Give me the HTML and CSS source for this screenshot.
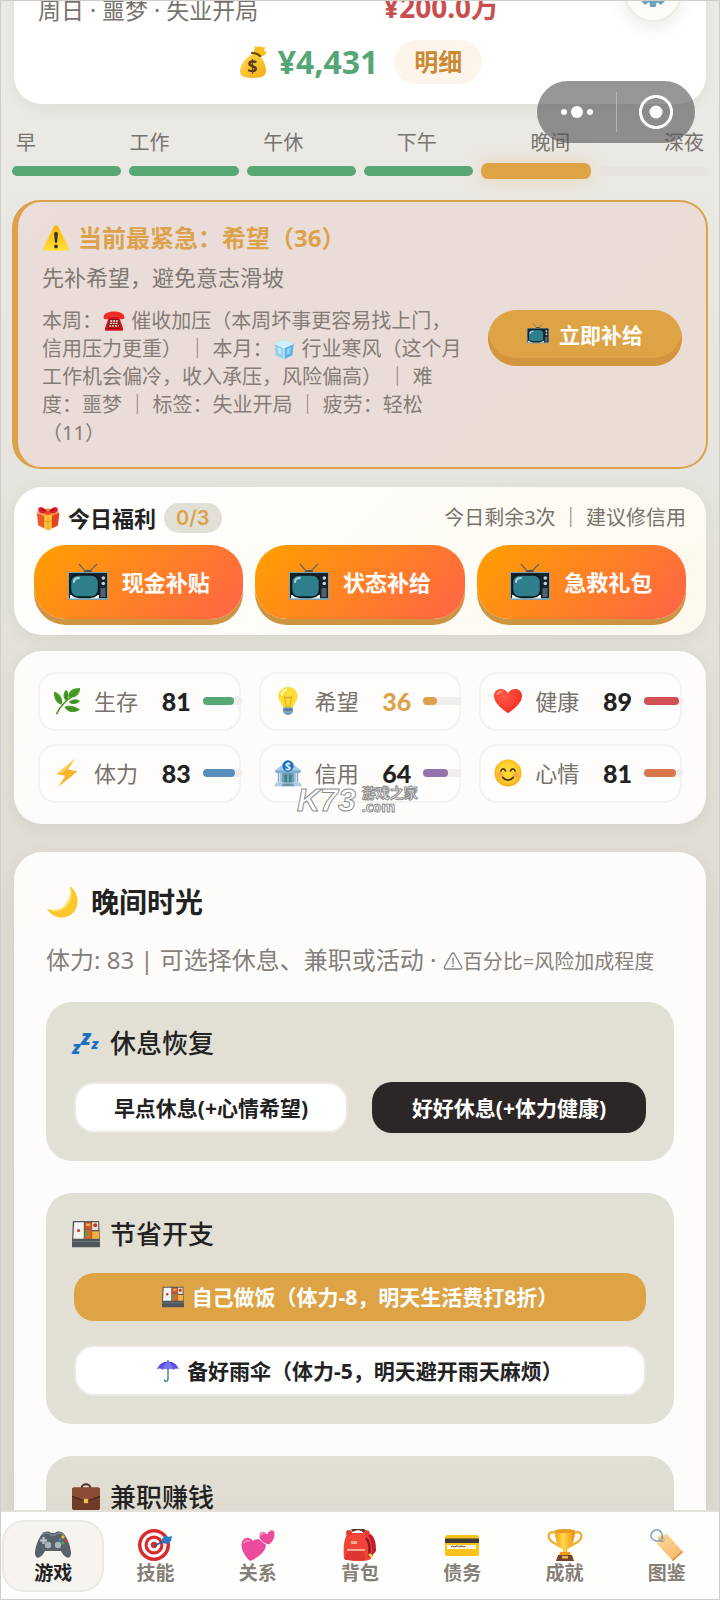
FILE: index.html
```html
<!DOCTYPE html>
<html lang="zh-CN">
<head>
<meta charset="utf-8">
<meta name="viewport" content="width=device-width, initial-scale=1">
<title>晚间时光</title>
<link rel="stylesheet" href="styles.css">
</head>
<body>
<svg class="sprite" aria-hidden="true">
  <defs>
    <linearGradient id="g-bag" x1="0" y1="0" x2="1" y2="1"><stop offset="0" stop-color="#ffd94a"/><stop offset="1" stop-color="#f5ae18"/></linearGradient>
    <linearGradient id="g-warn" x1="0" y1="0" x2="0" y2="1"><stop offset="0" stop-color="#ffb300"/><stop offset="1" stop-color="#ffe23e"/></linearGradient>
    <radialGradient id="g-heart" cx=".35" cy=".3" r=".8"><stop offset="0" stop-color="#ff5a4a"/><stop offset="1" stop-color="#f0281e"/></radialGradient>
    <radialGradient id="g-face" cx=".5" cy=".45" r=".55"><stop offset=".5" stop-color="#ffd733"/><stop offset="1" stop-color="#f7ae1c"/></radialGradient>
    <linearGradient id="g-cup" x1="0" y1="0" x2="1" y2="0"><stop offset="0" stop-color="#f49a16"/><stop offset=".4" stop-color="#ffd94d"/><stop offset="1" stop-color="#f08f10"/></linearGradient>
    <linearGradient id="g-tag" x1="0" y1="0" x2="1" y2="1"><stop offset="0" stop-color="#ffd9a0"/><stop offset="1" stop-color="#f5b562"/></linearGradient>
  </defs>
  <symbol id="gear" viewBox="0 0 32 32">
    <g fill="#6fa3bd"><circle cx="16" cy="16" r="11"/><path d="M13 1h6l1 6h-8zM13 31h6l1-6h-8z"/><path d="M1 13v6l6 1v-8zM31 13v6l-6 1v-8z"/><path transform="rotate(45 16 16)" d="M13 1h6l1 6h-8zM13 31h6l1-6h-8zM1 13v6l6 1v-8zM31 13v6l-6 1v-8z"/></g>
    <circle cx="16" cy="16" r="5" fill="#fdfcf9"/>
  </symbol>
  <symbol id="warn" viewBox="0 0 32 32">
    <path d="M16 1.500c1 0 1.700.5 2.200 1.400l12.400 24c.9 1.800-.1 3.600-2 3.600H3.400c-1.900 0-2.900-1.800-2-3.600l12.400-24c.5-.9 1.200-1.400 2.200-1.400z" fill="url(#g-warn)"/>
    <path d="M13.900 11.500c0-3 4.200-3 4.200 0l-.8 9c-.2 1.700-2.400 1.700-2.600 0z" fill="#333"/><circle cx="16" cy="25.600" r="2.100" fill="#333"/>
  </symbol>
  <symbol id="phone" viewBox="0 0 32 32">
    <path d="M9 9h14l6 17v4H3v-4z" fill="#d7141a"/>
    <path d="M1 12c-1-7 6-10 15-10s16 3 15 10c0 2-8 2-8 0 0-3-1-3-7-3s-7 0-7 3c0 2-8 2-8 0z" fill="#ef2b27"/>
    <path d="M9 13h14l2 12H7z" fill="#8d1013"/>
    <path d="M10.500 16h11M9.800 19.500h12.400M9 23h14" stroke="#fff" stroke-width="2" stroke-dasharray="3 1.200"/>
    <path d="M4 27h24" stroke="#9f0d12" stroke-width="1.500"/>
  </symbol>
  <symbol id="ice" viewBox="0 0 32 32">
    <path d="M3 8l14-6 13 6-2 17-12 6L4 25z" fill="#8fd0ef"/><path d="M3 8l14-6 13 6-14 6z" fill="#cdeefb"/><path d="M16 14l14-6-2 17-12 6z" fill="#57b2df"/>
    <path d="M16 14v16M4 8.500l12 5.500 13-5.500" stroke="#eefaff" stroke-width="1.500" fill="none"/><path d="M7 14l5 2v8l-4-2z" fill="#c3e9f9"/><path d="M20 16l6-3-1 9-5 3z" fill="#90d3f1"/>
  </symbol>
  <symbol id="tv" viewBox="0 0 40 38">
    <path d="M18 9L11 1M21 9l8-8" stroke="#5d6a6c" stroke-width="1.200"/><path d="M15 10c1-4 9-4 10 0z" fill="#55483c"/>
    <rect x="0" y="9" width="40" height="28" fill="#7aa3ad"/><rect x="1" y="10" width="38" height="25" fill="#17242e"/>
    <path d="M2 32v3.500h9L5 32zM31 32v3.500h-9l6-3.500z" fill="#eef6f6"/>
    <rect x="2.500" y="12" width="28" height="22" rx="7" fill="#2e7e8b" stroke="#0e161e" stroke-width="1.500"/>
    <path d="M6 19c0-3 2-4 5-4" stroke="#aed3da" stroke-width="2" stroke-linecap="round" fill="none"/>
    <rect x="32.500" y="25" width="5" height="9" fill="#52606c"/><circle cx="35.300" cy="15" r="1.800" fill="#c6cfd5"/><circle cx="35.300" cy="20.500" r="1.800" fill="#c6cfd5"/>
  </symbol>
  <symbol id="gift" viewBox="0 0 32 32">
    <path d="M1 9l15 6 15-6-2 17-13 6L3 26z" fill="#ef5a28"/><path d="M16 15l15-6-2 17-13 6z" fill="#e2431f"/>
    <path d="M1 8L16 3l15 5-15 7z" fill="#ff8a2b"/><path d="M11 13l10-1v18l-5 2-5-2z" fill="#fdc53a"/><path d="M16 15v17M11 20l5 1.500 5-1.500" stroke="#e09a1e" stroke-width="1.300" fill="none"/>
    <path d="M16 9C11 1 4-1 3 4s6 7 13 5zM16 9c5-8 12-10 13-5s-6 7-13 5z" fill="#de2128"/><path d="M7 5c2-1 4 0 6 2M25 5c-2-1-4 0-6 2" stroke="#8f1014" stroke-width="1.600" fill="none"/><circle cx="16" cy="9" r="3" fill="#f24338"/>
  </symbol>
  <symbol id="herb" viewBox="0 0 32 32">
    <path d="M4 31C8 21 16 15 24 9" stroke="#4d8f22" stroke-width="1.800" fill="none"/>
    <g fill="#4b9e2a"><path d="M31 1c-9 0-14 3-13 11C26 13 31 8 31 1z"/><path d="M15 3c-4 4-4 9 0 13 4-4 4-9 0-13z"/><path d="M1 5c0 9 3 14 9 15 2-7-2-13-9-15z"/><path d="M18 17c4-4 9-4 13-1-4 4-9 5-13 1z"/><path d="M13 23c5-3 12-2 18 3-7 4-13 4-18-3z"/></g>
    <path d="M29 3l-9 8M15 6v8M3 9l6 9M20 17h8M16 24l11 2" stroke="#2f7a17" stroke-width="1" fill="none"/>
  </symbol>
  <symbol id="bulb" viewBox="0 0 32 32">
    <path d="M16 0C9 0 5 5 5 10.500c0 5 3.500 7.500 5 12.500h12c1.500-5 5-7.500 5-12.500C27 5 23 0 16 0z" fill="#fedb35"/><path d="M9 9c0-3 2-5 5-6" stroke="#fff7a8" stroke-width="2.500" stroke-linecap="round" fill="none"/>
    <path d="M12 11l2 12h4l2-12-2.500 2L16 11l-1.500 2z" fill="none" stroke="#f3a91c" stroke-width="1.300"/>
    <path d="M10.500 23h11v5c0 2-3 4-5.500 4s-5.500-2-5.500-4z" fill="#6fa3b5"/><path d="M11 26h10" stroke="#426f80" stroke-width="1.500"/>
  </symbol>
  <symbol id="heart" viewBox="0 0 32 32"><path d="M16 30C6 23 0 17 0 10 0 2 11-1 16 7c5-8 16-5 16 3 0 7-6 13-16 20z" fill="url(#g-heart)"/><path d="M4 8c1-2 3-3 5-3" stroke="#ff8e7e" stroke-width="2" stroke-linecap="round" fill="none"/></symbol>
  <symbol id="bolt" viewBox="0 0 32 32"><path d="M25 0L4 17l10 2L6 32l22-18-11-2z" fill="#f9b52a"/><path d="M25 0L4 17l8-2z" fill="#ffd15a"/></symbol>
  <symbol id="smile" viewBox="0 0 32 32"><circle cx="16" cy="16" r="15.500" fill="url(#g-face)"/><circle cx="7" cy="18" r="3.500" fill="#ffad42"/><circle cx="25" cy="18" r="3.500" fill="#ffad42"/><path d="M8 13.500c1-3 4-3 5 0M19 13.500c1-3 4-3 5 0" stroke="#47320f" stroke-width="2" stroke-linecap="round" fill="none"/><path d="M10 21c3 4 9 4 12 0" stroke="#47320f" stroke-width="2" stroke-linecap="round" fill="none"/></symbol>
  <symbol id="moon" viewBox="0 0 32 32"><path d="M24 0c9 7 10 19 3 27-7 7-20 6-26-4 8 3 16 1 20-5 4-5 5-11 3-18z" fill="#fcc62d"/><path d="M24 0c3 7 2 14-2 19-5 7-14 8-21 4 9 2 16 0 19-6 4-5 5-11 4-17z" fill="#ffe06d"/></symbol>
  <symbol id="bento" viewBox="0 0 32 32">
    <path d="M1 1h30l1 23v7H0v-7z" fill="#4f565c"/><path d="M2.500 2.500h11v19h-12z" fill="#f5f3f0"/><circle cx="7.500" cy="12" r="1.800" fill="#d13a2a"/>
    <path d="M14.500 2.500h8v8h-8z" fill="#c6532c"/><path d="M23 2.500h7v9h-7z" fill="#f3dfd0"/><circle cx="26.500" cy="6" r="2.300" fill="#b5412d"/><path d="M14.500 11h8v10.500h-8z" fill="#e0622c"/><path d="M15 13l3-1v6l-3 2z" fill="#55a23b"/><path d="M23 13h8v8.500h-8z" fill="#f4b13d"/><path d="M16 4h5v3h-5z" fill="#efa63c"/><path d="M0 24h32v1H0z" fill="#777e83"/>
  </symbol>
  <symbol id="umbrella" viewBox="0 0 32 32"><path d="M16 0v28c0 4-5 4-5 1" stroke="#3a7d86" stroke-width="2" fill="none" stroke-linecap="round"/><path d="M0 14C2 7 8 2 16 2s14 5 16 12c-2-2-5-2-8 0-3-2-5-2-8 0-3-2-5-2-8 0-3-2-6-2-8 0z" fill="#5c4ee0"/><path d="M16 2c-4 3-7 7-8 12 3-2 5-2 8 0 3-2 5-2 8 0-1-5-4-9-8-12z" fill="#7c6ff3"/></symbol>
  <symbol id="case" viewBox="0 0 32 32"><path d="M11 6c0-6 10-6 10 0" stroke="#54301f" stroke-width="2.200" fill="none"/><rect y="5" width="32" height="26" rx="2.500" fill="#703b28"/><path d="M0 7c0-1 1-2 2-2h28c1 0 2 1 2 2v8l-13 5h-6L0 15z" fill="#8b4c33"/><path d="M0 15l13 5h6l13-5" stroke="#482214" stroke-width="1.200" fill="none"/><rect x="13.500" y="18" width="5" height="5" rx="1" fill="#f0bf4b"/></symbol>
  <symbol id="pad" viewBox="0 0 36 28"><path d="M7 3c2-3 7-3 9-1h4c2-2 7-2 9 1 4 5 7 14 7 19 0 7-6 6-10-2H10C6 28 0 29 0 22 0 17 3 8 7 3z" fill="#56616a"/><path d="M7 4c3-3 7-2 9 0h4c2-2 6-3 9 0" stroke="#7d8890" stroke-width="1.500" fill="none"/><path d="M8.500 6v7M5 9.500h7" stroke="#c0c9cf" stroke-width="2.200"/><circle cx="13" cy="14" r="3.200" fill="#aab4bb"/><circle cx="23" cy="14" r="3.200" fill="#aab4bb"/><circle cx="28" cy="6" r="1.700" fill="#f4bb2c"/><circle cx="25" cy="9" r="1.600" fill="#3a8fd0"/><circle cx="31" cy="9.500" r="1.600" fill="#e23d32"/><circle cx="28" cy="12" r="1.600" fill="#46aa50"/></symbol>
  <symbol id="target" viewBox="0 0 34 32"><circle cx="16" cy="16" r="16" fill="#d92b2f"/><circle cx="16" cy="16" r="12.500" fill="#fff"/><circle cx="16" cy="16" r="9.500" fill="#d92b2f"/><circle cx="16" cy="16" r="6.300" fill="#fff"/><circle cx="16" cy="16" r="3.200" fill="#d92b2f"/><path d="M16 17l10-5" stroke="#2d5c8f" stroke-width="1.600"/><path d="M24 10l4-4 2 2 4-1-1 5-4 3-5-1z" fill="#2a7cc7"/></symbol>
  <symbol id="hearts" viewBox="0 0 34 32"><path d="M9 32C3 27-1 18 1 13c2-6 9-5 11-1 4-4 12-1 13 4 0 6-8 13-16 16z" fill="#ec4a9c"/><path d="M28 16c-5-1-10-5-10-9 0-5 6-6 8-2 2-5 8-6 8 0 0 4-2 8-6 11z" fill="#ec4a9c" stroke="#fff" stroke-width="1"/><path d="M3 14c1-2 3-3 5-2M20 6c1-2 2-2 4-2" stroke="#f990c5" stroke-width="1.600" stroke-linecap="round" fill="none"/></symbol>
  <symbol id="pack" viewBox="0 0 34 32"><path d="M9 2c3-3 10-3 13 1" stroke="#55352d" stroke-width="3" fill="none"/><path d="M24 4c8 1 9 10 9 18l-5 6z" fill="#c4202a"/><path d="M5 4h17c7 5 8 16 6 26-7 3-18 3-27 0C0 18 1 9 5 4z" fill="#f2453a"/><path d="M4 22h17l1 9H2z" fill="#df342f"/><path d="M4 21h18" stroke="#f7b99b" stroke-width="1.800"/><path d="M8 12h6v3H8z" fill="#f3ad8d"/><path d="M23 9c4 4 4 12 3 19" stroke="#8d1820" stroke-width="2.500" fill="none"/><circle cx="6" cy="4" r="3" fill="#e63b34"/><circle cx="24" cy="4" r="2.700" fill="#e63b34"/><path d="M26 25l3 3" stroke="#f3c443" stroke-width="3"/></symbol>
  <symbol id="card" viewBox="0 0 34 32"><rect y="6" width="34" height="21" rx="2.500" fill="#fcc21b"/><path d="M0 9.500h34v4.500H0z" fill="#3f3a38"/><path d="M2 16h29v4H2z" fill="#fff8e2"/><path d="M6 18c2-2 3 1 5-.5s3 1 4 0 3 .5 5 0" stroke="#444" stroke-width="1" fill="none"/></symbol>
  <symbol id="cup" viewBox="0 0 34 32"><path d="M8 4C0 1-1 8 3 12c3 3 7 3 9 6M26 4c8-3 9 4 5 8-3 3-7 3-9 6" stroke="#f0ab2c" stroke-width="2.200" fill="none"/><path d="M7 1h20c0 9-2 16-8 20v4h-4v-4C9 17 7 10 7 1z" fill="url(#g-cup)"/><ellipse cx="17" cy="2" rx="10" ry="2" fill="#e79b1d"/><path d="M12 23h10l1 4H11z" fill="#ed9c19"/><path d="M10 26h14l2 6H8z" fill="#74422e"/><path d="M14 27h6v2.500h-6z" fill="#eab94e"/></symbol>
  <symbol id="tag" viewBox="0 0 34 32"><path d="M8 7l9-2 16 18-10 9L7 15z" fill="url(#g-tag)"/><path d="M33 23l-10 9-1-1 10-9z" fill="#d98b39"/><circle cx="12" cy="10.500" r="2.200" fill="#fff4e0" stroke="#c98b48"/><path d="M12 11c-4 2-9 1-11-3C0 4 4 0 8 1c4 1 5 6 4 10z" fill="none" stroke="#7aa4b8" stroke-width="1.500"/></symbol>
  <symbol id="alert" viewBox="0 0 20 20"><path d="M10 2c.6 0 1 .3 1.300.8l7.200 13c.6 1.100-.1 2.200-1.300 2.200H2.800c-1.200 0-1.900-1.100-1.300-2.200l7.200-13C9 2.300 9.400 2 10 2zM10 7v6" fill="none" stroke="currentColor" stroke-width="1.300" stroke-linecap="round"/><circle cx="10" cy="15.300" r=".9" fill="currentColor"/></symbol>
</svg>

<div class="app">
  <div class="capsule">
    <button type="button" class="capsule-btn" aria-label="更多"><svg width="34" height="14" viewBox="0 0 34 14" fill="#fff"><circle cx="4" cy="7" r="3"/><circle cx="17" cy="7" r="6"/><circle cx="30" cy="7" r="3"/></svg></button>
    <button type="button" class="capsule-btn" aria-label="关闭"><svg width="36" height="36" viewBox="0 0 36 36"><circle cx="18" cy="18" r="15.500" fill="none" stroke="#fff" stroke-width="3"/><circle cx="18" cy="18" r="6.500" fill="#fff"/></svg></button>
  </div>

  <main class="scroll">
    <header class="top card">
      <div class="top-row">
        <span class="day">周日 · 噩梦 · 失业开局</span>
        <span class="debt">¥200.0万</span>
        <button type="button" class="gear" aria-label="设置"><svg class="i30"><use href="#gear"/></svg></button>
      </div>
      <div class="money-row">
        <svg class="i32" viewBox="0 0 32 32">
          <path d="M15 8C8 11 2 19 2 25c0 5 4 7 13 7s13-2 13-7c0-6-3-13-9-17z" fill="url(#g-bag)"/>
          <path d="M15 7c1-2 2-5 2-7 3 2 4 0 5 0 1 2 3 1 5 1l-1 4 3 1c-2 3-5 5-8 5z" fill="#fbbd1c"/>
          <path d="M14 7c3 0 6 1 8 3" stroke="#69421b" stroke-width="2.200" stroke-linecap="round" fill="none"/>
          <text x="14.500" y="27" class="dollar" fill="#5d3b18">$</text>
        </svg>
        <strong class="money">¥4,431</strong>
        <button type="button" class="detail">明细</button>
      </div>
    </header>

    <section class="phases">
      <div class="phase-names"><span>早</span><span>工作</span><span>午休</span><span>下午</span><span>晚间</span><span>深夜</span></div>
      <div class="phase-bars"><i class="done"></i><i class="done"></i><i class="done"></i><i class="done"></i><i class="now"></i><i></i></div>
    </section>

    <section class="urgent">
      <div class="urgent-text">
        <h2><svg class="i28"><use href="#warn"/></svg>当前最紧急：希望（36）</h2>
        <p class="hint">先补希望，避免意志滑坡</p>
        <p class="notes">本周：<svg class="i24"><use href="#phone"/></svg> 催收加压（本周坏事更容易找上门，<br>信用压力更重） ｜ 本月：<svg class="i24"><use href="#ice"/></svg> 行业寒风（这个月<br>工作机会偏冷，收入承压，风险偏高） ｜ 难<br>度：噩梦 ｜ 标签：失业开局 ｜ 疲劳：轻松<br>（11）</p>
      </div>
      <button type="button" class="supply"><svg class="tv-sm"><use href="#tv"/></svg>立即补给</button>
    </section>

    <section class="welfare card">
      <div class="welfare-head">
        <svg class="i24"><use href="#gift"/></svg>
        <h2>今日福利</h2>
        <span class="count">0/3</span>
        <span class="remain">今日剩余3次 ｜ 建议修信用</span>
      </div>
      <div class="thirds">
        <button type="button" class="gift-btn"><svg class="tv-lg"><use href="#tv"/></svg>现金补贴</button>
        <button type="button" class="gift-btn"><svg class="tv-lg"><use href="#tv"/></svg>状态补给</button>
        <button type="button" class="gift-btn"><svg class="tv-lg"><use href="#tv"/></svg>急救礼包</button>
      </div>
    </section>

    <section class="stats card">
      <div class="stat"><svg class="i28"><use href="#herb"/></svg><span>生存</span><b>81</b><i class="meter"><i class="green" style="width:81%"></i></i></div>
      <div class="stat low"><svg class="i28"><use href="#bulb"/></svg><span>希望</span><b>36</b><i class="meter"><i class="gold" style="width:36%"></i></i></div>
      <div class="stat"><svg class="i28"><use href="#heart"/></svg><span>健康</span><b>89</b><i class="meter"><i class="red" style="width:89%"></i></i></div>
      <div class="stat"><svg class="i28"><use href="#bolt"/></svg><span>体力</span><b>83</b><i class="meter"><i class="blue" style="width:83%"></i></i></div>
      <div class="stat">
        <svg class="i28" viewBox="0 0 32 32">
          <path d="M16 1l5 4 10 8v2H1v-2l10-8z" fill="#a9cbe6"/><path d="M2 13h28v3H2z" fill="#82adcc"/><circle cx="16" cy="8" r="6.500" fill="#1f6fc0"/>
          <text x="16" y="12.500" class="dollar-sm" fill="#dff0ff">$</text>
          <path d="M4 16h5v11H4zM23 16h5v11h-5z" fill="#c8dff0"/><path d="M5 16v11M8 16v11M24 16v11M27 16v11" stroke="#7ba3c0" stroke-width="1"/><path d="M9 16h14v11H9z" fill="#6f9bb3"/><path d="M12 18h8v9h-8z" fill="#3e7f90"/><path d="M16 18v9" stroke="#a8ced8"/>
          <path d="M2 27h28l2 4H0z" fill="#a9cbe6"/><path d="M10 28h12l1 3H9z" fill="#7296ad"/>
        </svg>
        <span>信用</span><b>64</b><i class="meter"><i class="purple" style="width:64%"></i></i>
      </div>
      <div class="stat"><svg class="i28"><use href="#smile"/></svg><span>心情</span><b>81</b><i class="meter"><i class="orange" style="width:81%"></i></i></div>
      <div class="mark"><span class="mark-k">K73</span><span class="mark-r">游戏之家<br>.com</span></div>
    </section>

    <section class="evening card">
      <h1><svg class="i32"><use href="#moon"/></svg>晚间时光</h1>
      <p class="lead">体力: 83 | 可选择休息、兼职或活动 · <small><svg class="i20"><use href="#alert"/></svg>百分比=风险加成程度</small></p>

      <div class="panel">
        <h3><svg class="i28 zz" viewBox="0 0 32 32"><text class="zs" fill="#1d6fc4"><tspan x="0" y="29" font-size="20">z</tspan><tspan x="10" y="18" font-size="24">z</tspan><tspan x="22" y="23" font-size="17">z</tspan></text></svg>休息恢复</h3>
        <div class="pair">
          <button type="button" class="btn light">早点休息(+心情希望)</button>
          <button type="button" class="btn dark">好好休息(+体力健康)</button>
        </div>
      </div>

      <div class="panel">
        <h3><svg class="i28"><use href="#bento"/></svg>节省开支</h3>
        <div class="stack">
          <button type="button" class="btn amber"><svg class="i22"><use href="#bento"/></svg>自己做饭（体力-8，明天生活费打8折）</button>
          <button type="button" class="btn light"><svg class="i22"><use href="#umbrella"/></svg>备好雨伞（体力-5，明天避开雨天麻烦）</button>
        </div>
      </div>

      <div class="panel last">
        <h3><svg class="i28"><use href="#case"/></svg>兼职赚钱</h3>
      </div>
    </section>
  </main>

  <nav class="tabs">
    <button type="button" class="tab on"><svg><use href="#pad"/></svg>游戏</button>
    <button type="button" class="tab"><svg><use href="#target"/></svg>技能</button>
    <button type="button" class="tab"><svg><use href="#hearts"/></svg>关系</button>
    <button type="button" class="tab"><svg><use href="#pack"/></svg>背包</button>
    <button type="button" class="tab"><svg><use href="#card"/></svg>债务</button>
    <button type="button" class="tab"><svg><use href="#cup"/></svg>成就</button>
    <button type="button" class="tab"><svg><use href="#tag"/></svg>图鉴</button>
  </nav>
</div>
</body>
</html>
```

FILE: styles.css
```css
* { box-sizing: border-box; }

body {
  margin: 0;
  font-family: "Noto Sans", "Noto Sans CJK SC", sans-serif;
  color: #222;
}

h1, h2, h3, p { margin: 0; }

button {
  font: inherit;
  border: 0;
  padding: 0;
  cursor: pointer;
}

svg { flex: none; }

.sprite { position: absolute; width: 0; height: 0; }
.dollar, .dollar-sm { font-weight: 700; text-anchor: middle; }
.dollar { font-size: 18px; }
.dollar-sm { font-size: 12px; }
.zs { font-weight: 900; font-style: italic; }
.zz { overflow: visible; }

.i20 { width: 20px; height: 20px; }
.i22 { width: 22px; height: 22px; }
.i24 { width: 24px; height: 24px; }
.i28 { width: 28px; height: 28px; }
.i30 { width: 30px; height: 30px; }
.i32 { width: 32px; height: 32px; }

.app {
  position: relative;
  height: 100vh;
  display: flex;
  flex-direction: column;
  overflow: hidden;
  background: linear-gradient(#edebe7, #e6e4de 30%, #e0dbd2 60%, #dfdad0);
  border: 1px solid #cfcdca;
}

.scroll {
  flex: 1;
  min-height: 0;
  overflow: hidden;
  padding: 0 13px;
}

.card {
  border-radius: 28px;
  background: #fdfcfa;
  box-shadow: 0 4px 16px rgba(120, 110, 90, 0.1);
}

.top {
  margin-top: -44px;
  padding: 7px 24px 20px;
  background: #fff;
}

.top-row {
  display: flex;
  align-items: flex-end;
}

.day {
  font-size: 23px;
  line-height: 24px;
  color: #77726c;
}

.debt {
  flex: 1;
  text-align: center;
  font-size: 28px;
  line-height: 30px;
  font-weight: 700;
  color: #c94f4f;
}

.gear {
  display: grid;
  place-items: center;
  width: 58px;
  height: 58px;
  border-radius: 50%;
  background: #fdfcf9;
  border: 2px solid #f0ece4;
  box-shadow: 0 6px 16px rgba(100, 90, 70, 0.12);
}

.money-row {
  display: flex;
  align-items: center;
  justify-content: center;
  gap: 8px;
  margin-top: 18px;
}

.money {
  font-size: 32px;
  line-height: 44px;
  color: #55a676;
}

.detail {
  margin-left: 8px;
  padding: 0 20px;
  font-size: 24px;
  line-height: 44px;
  font-weight: 700;
  border-radius: 22px;
  color: #c98a33;
  background: #fdf5eb;
}

.capsule {
  position: absolute;
  z-index: 2;
  top: 80px;
  right: 24px;
  width: 158px;
  height: 62px;
  display: grid;
  grid-template-columns: 1fr 1fr;
  align-items: center;
  border-radius: 31px;
  background: rgba(80, 80, 80, 0.6);
}

.capsule-btn {
  display: grid;
  place-items: center;
  height: 40px;
  background: none;
}

.capsule-btn + .capsule-btn { border-left: 1px solid #b5b5b5; }

.phases {
  margin: 25px -2px 0;
}

.phase-names {
  display: flex;
  justify-content: space-between;
  padding: 0 4px;
  font-size: 20px;
  line-height: 28px;
  color: #77736d;
}

.phase-bars {
  display: grid;
  grid-template-columns: repeat(6, 1fr);
  align-items: center;
  gap: 8px;
  height: 16px;
  margin-top: 6px;
}

.phase-bars i {
  height: 10px;
  border-radius: 5px;
  background: #e7e4df;
}

.phase-bars .done { background: #57a775; }

.phase-bars .now {
  height: 16px;
  border-radius: 7px;
  background: #dea345;
  box-shadow: 0 0 20px rgba(222, 163, 69, 0.3);
}

.urgent {
  display: flex;
  align-items: center;
  justify-content: space-between;
  margin: 21px -2px 0;
  padding: 20px 24px;
  border: 2px solid #dba24b;
  border-left-width: 6px;
  border-radius: 28px;
  background: linear-gradient(135deg, #eaddda, #eaddd5);
}

.urgent h2 {
  display: flex;
  align-items: center;
  gap: 8px;
  font-size: 24px;
  line-height: 32px;
  color: #dba24b;
}

.hint {
  margin-top: 7px;
  font-size: 22px;
  line-height: 32px;
  color: #807872;
}

.notes {
  margin-top: 14px;
  font-size: 20px;
  line-height: 28px;
  white-space: nowrap;
  color: #857c76;
}

.notes svg { vertical-align: -4px; height: 22px; }

.supply {
  display: flex;
  align-items: center;
  justify-content: center;
  gap: 10px;
  width: 194px;
  height: 56px;
  margin-top: 6px;
  padding-bottom: 8px;
  border-radius: 28px;
  font-size: 21px;
  font-weight: 700;
  color: #fff;
  background: #dea345;
  box-shadow: inset 0 -8px 0 #d3963f;
}

.tv-sm { width: 22px; height: 21px; }
.tv-lg { width: 40px; height: 38px; }

.welfare {
  margin-top: 18px;
  padding: 16px 20px 10px;
  background: linear-gradient(135deg, #fff, #fdf9ee);
}

.welfare-head {
  display: flex;
  align-items: center;
  gap: 8px;
  margin-bottom: 12px;
  padding-left: 2px;
}

.welfare h2 { font-size: 22px; line-height: 30px; }

.count {
  padding: 0 12px;
  border-radius: 15px;
  font-family: Inter, sans-serif;
  font-size: 20px;
  line-height: 30px;
  font-weight: 600;
  color: #dba24b;
  background: #e2e0d6;
}

.remain {
  margin-left: auto;
  font-size: 20px;
  line-height: 30px;
  color: #77726c;
}

.thirds {
  display: grid;
  grid-template-columns: repeat(3, 1fr);
  gap: 12px;
}

.gift-btn {
  display: flex;
  align-items: center;
  justify-content: center;
  gap: 14px;
  height: 74px;
  margin-bottom: 6px;
  border-radius: 32px;
  font-size: 22px;
  line-height: 30px;
  font-weight: 700;
  color: #fff;
  background: linear-gradient(135deg, #ffa000, #ff6347);
  box-shadow: 0 6px 0 #cd9543;
}

.stats {
  position: relative;
  display: grid;
  grid-template-columns: repeat(3, 1fr);
  gap: 13px 18px;
  margin-top: 16px;
  padding: 21px 24px;
}

.stat {
  display: flex;
  align-items: center;
  height: 59px;
  padding: 0 0 2px 13px;
  border: 2px solid #f5f3f0;
  border-radius: 18px;
  background: #fefdfc;
}

.stat span {
  margin-left: 13px;
  font-size: 22px;
  line-height: 28px;
  color: #77726c;
}

.stat b {
  flex: 1;
  text-align: right;
  font-family: Lato, sans-serif;
  font-size: 25px;
  line-height: 28px;
  font-weight: 900;
}

.low b { color: #dba24b; }

.meter {
  flex: none;
  width: 39px;
  height: 8px;
  margin: 0 -3px 0 12px;
  border-radius: 4px;
  background: #efeeed;
}

.meter i {
  display: block;
  height: 8px;
  border-radius: 4px;
}

.green { background: #57a775; }
.gold { background: #dba24b; }
.red { background: #d04f55; }
.blue { background: #568dbd; }
.purple { background: #9572ac; }
.orange { background: #da764b; }

.mark {
  position: absolute;
  left: 283px;
  bottom: 8px;
  display: flex;
  align-items: center;
  gap: 6px;
  color: #fff;
  -webkit-text-stroke: 1px #8e8e8e;
}

.mark-k {
  font: italic 700 32px/32px "Liberation Sans", sans-serif;
}

.mark-r {
  font-size: 14px;
  line-height: 14px;
  font-weight: 700;
}

.evening {
  margin-top: 28px;
  padding: 32px 32px 0;
  border-radius: 28px 28px 0 0;
}

.evening h1 {
  display: flex;
  align-items: center;
  gap: 13px;
  font-size: 28px;
  line-height: 36px;
}

.lead {
  margin-top: 24px;
  font-size: 24px;
  line-height: 32px;
  white-space: nowrap;
  color: #85807b;
}

.lead small { font-size: 20px; }
.lead svg { vertical-align: -2px; }

.panel {
  margin-top: 24px;
  padding: 23px 28px 28px;
  border-radius: 26px;
  background: #e2e0d5;
}

.panel + .panel { margin-top: 32px; }

.panel h3 {
  display: flex;
  align-items: center;
  gap: 10px;
  margin-left: -2px;
  font-size: 26px;
  line-height: 36px;
  font-weight: 500;
}

.panel.last { padding-bottom: 200px; background: linear-gradient(#e2e0d5, #dedacf 60px); }

.pair {
  display: grid;
  grid-template-columns: 1fr 1fr;
  gap: 24px;
  margin-top: 21px;
}

.stack {
  display: grid;
  gap: 24px;
  margin-top: 21px;
}

.btn {
  display: flex;
  align-items: center;
  justify-content: center;
  gap: 8px;
  height: 51px;
  border-radius: 20px;
  font-size: 21px;
  line-height: 28px;
  font-weight: 700;
  white-space: nowrap;
}

.light { color: #222; background: #fff; border: 2px solid #ebe8e2; }
.dark { color: #fff; background: #2c2726; }
.amber { height: 48px; color: #fff; background: #dea345; }

.tabs {
  display: grid;
  grid-template-columns: repeat(7, 1fr);
  gap: 0;
  padding: 8px 1px 7px;
  border-top: 2px solid #e3e0d9;
  background: #fefefd;
}

.tab {
  display: flex;
  flex-direction: column;
  align-items: center;
  height: 72px;
  padding-top: 7px;
  border: 2px solid transparent;
  border-radius: 22px;
  font-size: 19px;
  line-height: 26px;
  font-weight: 700;
  color: #857f78;
  background: none;
}

.tab svg { width: 36px; height: 32px; margin-bottom: -1px; }
.tab.on { color: #222; background: #f7f4ef; border-color: #ebe9e3; }
```
